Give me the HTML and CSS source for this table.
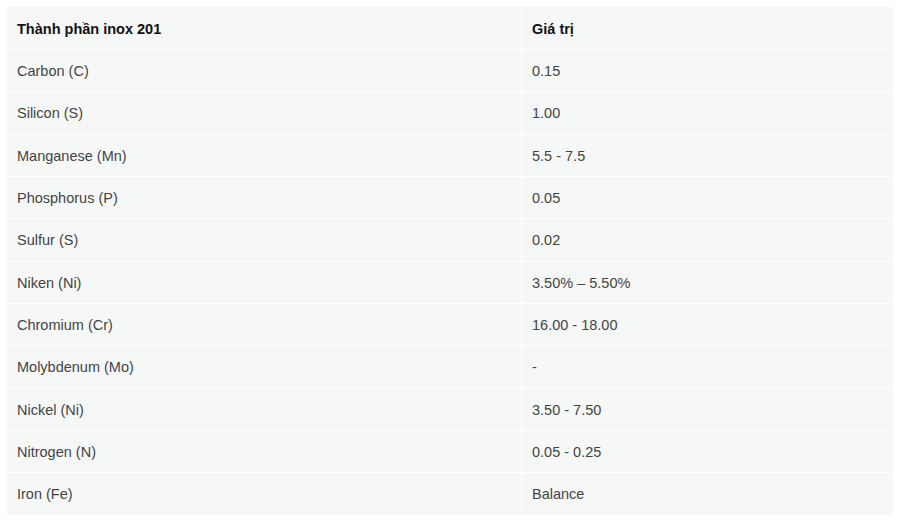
FILE: index.html
```html
<!DOCTYPE html>
<html lang="vi">
<head>
<meta charset="utf-8">
<link rel="stylesheet" href="styles.css">
</head>
<body>
<div class="wrap">
<table class="spec">
<thead>
<tr><th class="c1">Thành phần inox 201</th><th>Giá trị</th></tr>
</thead>
<tbody>
<tr><td>Carbon (C)</td><td>0.15</td></tr>
<tr><td>Silicon (S)</td><td>1.00</td></tr>
<tr><td>Manganese (Mn)</td><td>5.5 - 7.5</td></tr>
<tr><td>Phosphorus (P)</td><td>0.05</td></tr>
<tr><td>Sulfur (S)</td><td>0.02</td></tr>
<tr><td>Niken (Ni)</td><td>3.50% – 5.50%</td></tr>
<tr><td>Chromium (Cr)</td><td>16.00 - 18.00</td></tr>
<tr><td>Molybdenum (Mo)</td><td>-</td></tr>
<tr><td>Nickel (Ni)</td><td>3.50 - 7.50</td></tr>
<tr><td>Nitrogen (N)</td><td>0.05 - 0.25</td></tr>
<tr><td>Iron (Fe)</td><td>Balance</td></tr>
</tbody>
</table>
</div>
</body>
</html>
```
FILE: styles.css
```css
html, body {
  margin: 0;
  padding: 0;
  background: #ffffff;
}
.wrap {
  padding: 7px 11px 0 7px;
}
.spec {
  width: 886px;
  border-collapse: collapse;
  background: #f6f8f8;
  font-family: "Liberation Sans", Arial, sans-serif;
  font-size: 14.5px;
  color: #444444;
}
.spec th, .spec td {
  border: 1px solid #ffffff;
  padding: 12px 10px 10px 10px;
  line-height: 19.33px;
  text-align: left;
  vertical-align: middle;
}
.spec th {
  font-weight: bold;
  color: #111111;
  padding-top: 13px;
  padding-bottom: 9.67px;
}
.spec .c1 {
  width: 494px;
}
.spec tr > :first-child {
  border-left: none;
}
.spec tr > :last-child {
  border-right: none;
}
.spec thead tr:first-child > * {
  border-top: none;
}
.spec tbody tr:last-child > * {
  border-bottom: none;
}
```
